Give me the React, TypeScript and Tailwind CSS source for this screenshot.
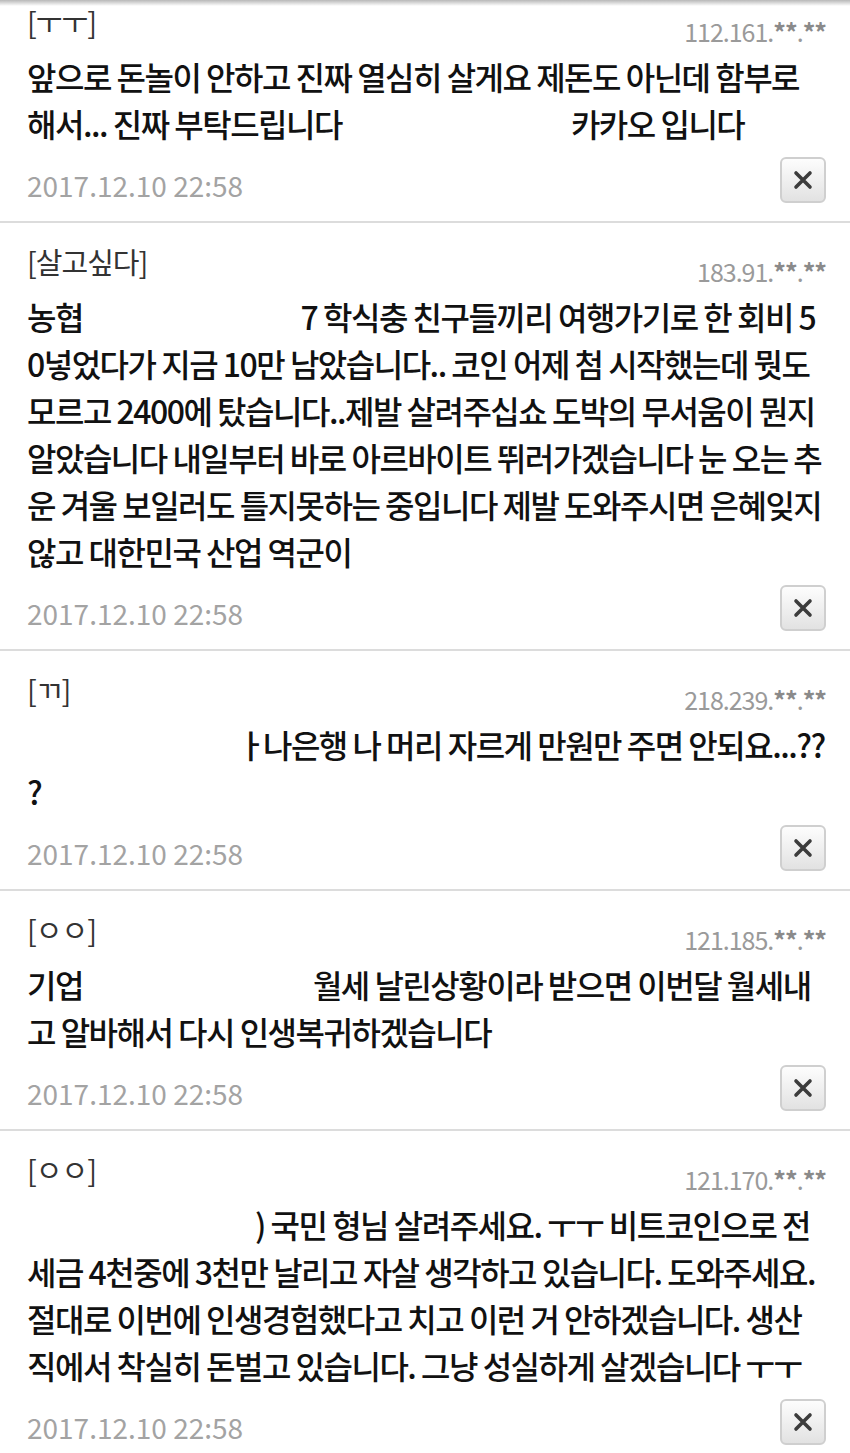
type Seg = string | { gap: number } | { tight: string };

type Comment = {
    name: string;
    ip: string;
    lines: Seg[][];
};

const comments: Comment[] = [
    {
        name: '[ㅜㅜ]',
        ip: '112.161.',
        lines: [
            ['앞으로 돈놀이 안하고 진짜 열심히 살게요 제돈도 아닌데 함부로'],
            ['해서... 진짜 부탁드립니다', { gap: 229 }, '카카오 입니다']
        ]
    },
    {
        name: '[살고싶다]',
        ip: '183.91.',
        lines: [
            ['농협 ', { gap: 212 }, '7 학식충 친구들끼리 여행가기로 한 회비 5'],
            ['0넣었다가 지금 10만 남았습니다.. 코인 어제 첨 시작했는데 뭣도'],
            ['모르고 2400에 탔습니다..제발 살려주십쇼 도박의 무서움이 뭔지'],
            ['알았습니다 내일부터 바로 아르바이트 뛰러가겠습니다 눈 오는 추'],
            ['운 겨울 보일러도 틀지못하는 중입니다 제발 도와주시면 은혜잊지'],
            ['않고 대한민국 산업 역군이']
        ]
    },
    {
        name: '[ㄲ]',
        ip: '218.239.',
        lines: [
            [{ gap: 210 }, { tight: 'ㅏ' }, '나은행 나 머리 자르게 만원만 주면 안되요...??'],
            ['?']
        ]
    },
    {
        name: '[ㅇㅇ]',
        ip: '121.185.',
        lines: [
            ['기업', { gap: 230 }, '월세 날린상황이라 받으면 이번달 월세내'],
            ['고 알바해서 다시 인생복귀하겠습니다']
        ]
    },
    {
        name: '[ㅇㅇ]',
        ip: '121.170.',
        lines: [
            [{ gap: 228 }, ') 국민 형님 살려주세요. ㅜㅜ 비트코인으로 전'],
            ['세금 4천중에 3천만 날리고 자살 생각하고 있습니다. 도와주세요.'],
            ['절대로 이번에 인생경험했다고 치고 이런 거 안하겠습니다. 생산'],
            ['직에서 착실히 돈벌고 있습니다. 그냥 성실하게 살겠습니다 ㅜㅜ']
        ]
    }
];

const DeleteButton = () => (
    <button className="w-[46px] h-[46px] flex items-center justify-center rounded-[6px] border-2 border-[#cfcfcf] bg-gradient-to-b from-[#fdfdfd] to-[#e2e2e2]">
        <svg width="20" height="20" viewBox="0 0 20 20">
            <path
                d="M3 3 L17 17 M17 3 L3 17"
                stroke="#3c3c3c"
                strokeWidth="3.6"
                strokeLinecap="round"
            />
        </svg>
    </button>
);

const CommentItem = ({ c, first }: { c: Comment; first: boolean }) => (
    <div
        className={
            first
                ? 'pl-[27px] pr-[24px] mt-[-3px] pb-[18px]'
                : 'pl-[27px] pr-[24px] pt-[20px] pb-[18px] border-t-2 border-[#dcdcdc]'
        }
    >
        <div className="flex justify-between items-start h-[36px]">
            <span className="text-[29px] leading-[36px] text-[#333] tracking-[-1px]">
                {c.name}
            </span>
            <span className="mt-[13px] text-[25px] leading-[30px] text-[#9a9a9a] tracking-[-1px]">
                {c.ip}
                <span className="font-bold text-[#8a8a8a]">**</span>.
                <span className="font-bold text-[#8a8a8a]">**</span>
            </span>
        </div>
        <div className="mt-[14px] text-[32px] leading-[47px] text-[#111] font-medium tracking-[-1.5px]">
            {c.lines.map((line, i) => (
                <div key={i} className="whitespace-nowrap">
                    {line.map((seg, j) => {
                        if (typeof seg === 'string') return <span key={j}>{seg}</span>;
                        if ('tight' in seg)
                            return (
                                <span key={j} className="mr-[-2px]">
                                    {seg.tight}
                                </span>
                            );
                        return (
                            <span
                                key={j}
                                className="inline-block"
                                style={{ width: seg.gap }}
                            />
                        );
                    })}
                </div>
            ))}
        </div>
        <div className="mt-[10px] flex justify-between items-end">
            <span className="pb-[2px] text-[28px] leading-[32px] text-[#a3a3a3] tracking-normal">
                2017.12.10 22:58
            </span>
            <DeleteButton />
        </div>
    </div>
);

const App = () => {
    return (
        <div
            className="w-[850px] min-h-[1453px] bg-white overflow-hidden"
            style={{ fontFamily: '"Noto Sans CJK KR", "Noto Sans", sans-serif' }}
        >
            <div className="h-[6px] bg-gradient-to-b from-[#b8b8b8] to-white" />
            {comments.map((c, i) => (
                <CommentItem key={i} c={c} first={i === 0} />
            ))}
        </div>
    );
};

export default App;
